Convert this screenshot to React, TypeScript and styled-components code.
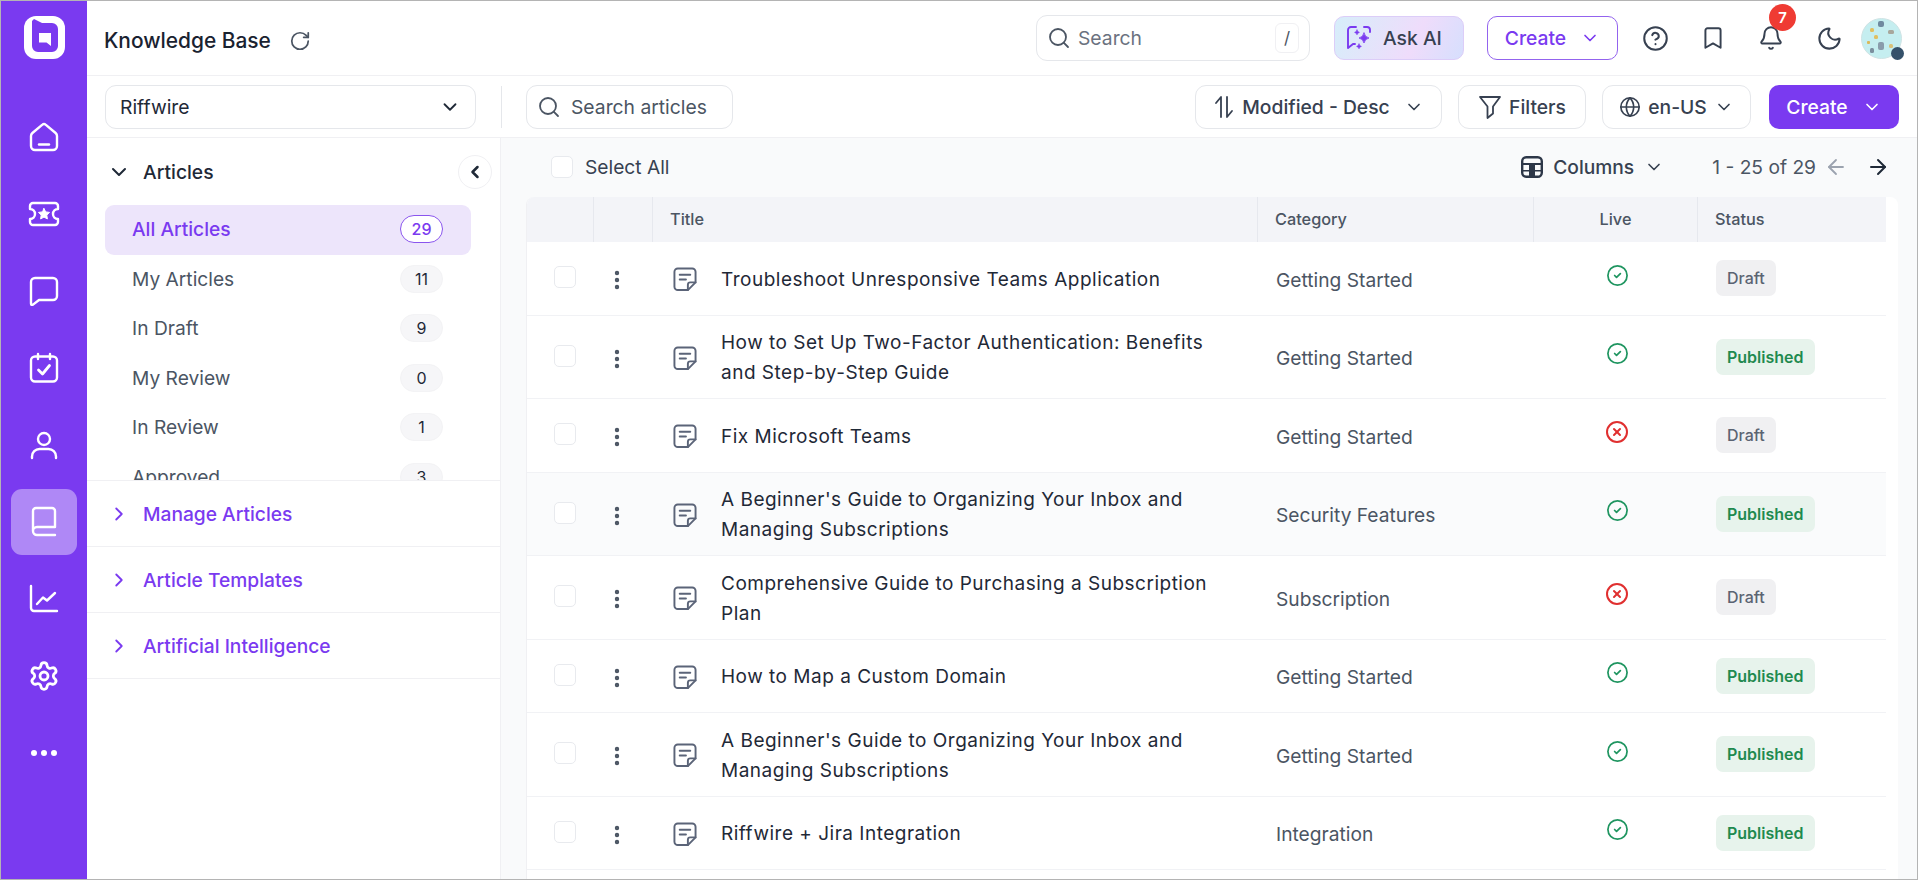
import React from "react";
import styled, { createGlobalStyle } from "styled-components";
import {
  ArrowLeft,
  ArrowRight,
  Bell,
  Bookmark,
  ChevronDown,
  ChevronLeft,
  ChevronRight,
  CircleCheck,
  CircleHelp,
  CircleX,
  EllipsisVertical,
  Globe,
  Moon,
  RotateCw,
  Search,
  Settings,
} from "lucide-react";

const GlobalStyle = createGlobalStyle`
  * { box-sizing: border-box; }
  html, body { margin: 0; padding: 0; background: #fff; }
  body { font-family: Inter, "Liberation Sans", sans-serif; }
`;

const Page = styled.div`
  display: flex;
  width: 1918px;
  height: 880px;
  overflow: hidden;
  border: 1px solid #b4b4b4;
  color: #1f2937;
`;

const Rail = styled.nav`
  flex: 0 0 86px;
  display: flex;
  flex-direction: column;
  align-items: center;
  background: #7a3af0;
  padding-top: 15px;
`;

const Logo = styled.div`
  height: 61px;
  margin-bottom: 27px;
`;

const RailItem = styled.div<{ $active?: boolean }>`
  width: 66px;
  height: 66px;
  margin-bottom: 11px;
  display: flex;
  align-items: center;
  justify-content: center;
  border-radius: 11px;
  color: #fff;
  background: ${(p) => (p.$active ? "rgba(255,255,255,0.4)" : "transparent")};
`;

const Main = styled.div`
  flex: 1;
  min-width: 0;
  display: flex;
  flex-direction: column;
`;

const TopBar = styled.header`
  flex: 0 0 75px;
  display: flex;
  align-items: center;
  padding: 0 15px 0 17px;
  border-bottom: 1px solid #f0f0f3;
`;

const PageTitle = styled.h1`
  margin: 5px 0 0;
  font-size: 20.9px;
  font-weight: 500;
  color: #1a2230;
`;

const Refresh = styled.span`
  display: flex;
  margin: 5px 0 0 18px;
  color: #4b5563;
`;

const TopRight = styled.div`
  margin-left: auto;
  display: flex;
  align-items: center;
`;

const GlobalSearch = styled.div`
  width: 274px;
  height: 46px;
  display: flex;
  align-items: center;
  gap: 7px;
  padding: 0 10px 0 10px;
  margin-right: 24px;
  border: 1.5px solid #e5e7eb;
  border-radius: 11px;
  color: #4b5563;
`;

const Placeholder = styled.span`
  flex: 1;
  color: #6b7280;
  font-size: 19.3px;
`;

const Kbd = styled.span`
  width: 24px;
  height: 30px;
  display: flex;
  align-items: center;
  justify-content: center;
  border: 1px solid #f0f0f3;
  border-radius: 6px;
  color: #4b5563;
  font-size: 17px;
`;

const AskAi = styled.div`
  width: 130px;
  height: 44px;
  display: flex;
  align-items: center;
  gap: 9px;
  padding-left: 9px;
  margin-right: 23px;
  border: 1.5px solid #dccdf8;
  border-radius: 10px;
  background: linear-gradient(115deg, #d6eefa 0%, #efdcfb 62%, #d6dffd 100%);
  font-size: 19.3px;
  font-weight: 500;
  color: #374151;
`;

const OutlineCreate = styled.div`
  width: 131px;
  height: 44px;
  display: flex;
  align-items: center;
  justify-content: center;
  gap: 14px;
  margin-right: 8px;
  border: 1.5px solid #9363ee;
  border-radius: 10px;
  color: #7a3af0;
  font-size: 19.3px;
  font-weight: 500;
`;

const TopIcon = styled.span`
  position: relative;
  width: 58px;
  display: flex;
  justify-content: center;
  color: #374151;
`;

const NotifyBadge = styled.span`
  position: absolute;
  top: -21px;
  left: 27px;
  width: 27px;
  height: 27px;
  display: flex;
  align-items: center;
  justify-content: center;
  border-radius: 50%;
  background: #ef3b33;
  color: #fff;
  font-size: 15px;
  font-weight: 600;
`;

const Avatar = styled.div`
  position: relative;
  width: 41px;
  height: 41px;
  margin-left: 3px;
`;

const AvatarDot = styled.span`
  position: absolute;
  right: -2px;
  bottom: -1px;
  width: 13px;
  height: 13px;
  border-radius: 50%;
  background: #35516a;
`;

const ToolBar = styled.div`
  flex: 0 0 62px;
  display: flex;
  align-items: center;
  padding: 0 18px 0 18px;
  border-bottom: 1px solid #f0f0f3;
`;

const Field = styled.div<{ $w: number }>`
  width: ${(p) => p.$w}px;
  height: 44px;
  display: flex;
  align-items: center;
  border: 1.5px solid #e5e7eb;
  border-radius: 11px;
  background: #fff;
  font-size: 19.3px;
  color: #374151;
`;

const ProjectSelect = styled(Field)`
  justify-content: space-between;
  padding: 0 14px;
  color: #1f2937;
`;

const Divider = styled.span`
  width: 1px;
  height: 42px;
  margin: 0 24px 0 25px;
  background: #e5e7eb;
`;

const ArticleSearch = styled(Field)`
  gap: 10px;
  padding: 0 10px;
  color: #4b5563;
`;

const ToolRight = styled.div`
  margin-left: auto;
  display: flex;
  align-items: center;
  gap: 16px;
`;

const ToolButton = styled(Field)`
  justify-content: center;
  gap: 7px;
  font-weight: 500;
`;

const SortChevron = styled.span`
  display: flex;
  margin-left: 7px;
`;

const PrimaryCreate = styled.div`
  width: 130px;
  height: 44px;
  display: flex;
  align-items: center;
  justify-content: center;
  gap: 14px;
  margin-left: 2px;
  border-radius: 10px;
  background: #7a3af0;
  color: #fff;
  font-size: 19.3px;
  font-weight: 500;
`;

const Body = styled.div`
  flex: 1;
  min-height: 0;
  display: flex;
`;

const SidePanel = styled.aside`
  flex: 0 0 414px;
  display: flex;
  flex-direction: column;
  border-right: 1px solid #f0f0f3;
  background: #fff;
`;

const PanelHead = styled.div`
  height: 67px;
  flex: none;
  display: flex;
  align-items: center;
  padding: 1px 8px 0 20px;
  font-size: 19.3px;
  font-weight: 500;
  color: #1f2937;
`;

const PanelHeadLabel = styled.span`
  margin-left: 12px;
  flex: 1;
`;

const CollapseButton = styled.span`
  width: 34px;
  height: 34px;
  display: flex;
  align-items: center;
  justify-content: center;
  border: 1px solid #f0f0f3;
  border-radius: 50%;
  color: #1f2937;
`;

const ViewList = styled.div`
  height: 275px;
  flex: none;
  overflow: hidden;
  padding: 0 29px 0 18px;
`;

const ViewRow = styled.div<{ $active?: boolean }>`
  height: 49.5px;
  display: flex;
  align-items: center;
  justify-content: space-between;
  padding: 0 28px 2px 27px;
  border-radius: 9px;
  font-size: 19.2px;
  background: ${(p) => (p.$active ? "#ede5fb" : "transparent")};
  color: ${(p) => (p.$active ? "#7a3af0" : "#4b5563")};
  font-weight: ${(p) => (p.$active ? 500 : 400)};
  &:first-child {
    height: 50px;
  }
`;

const ViewCount = styled.span<{ $active?: boolean }>`
  width: 43px;
  height: 28px;
  display: flex;
  align-items: center;
  justify-content: center;
  border-radius: 14px;
  font-size: 16px;
  color: ${(p) => (p.$active ? "#7a3af0" : "#1f2937")};
  background: ${(p) => (p.$active ? "#fff" : "#f6f6f8")};
  border: ${(p) => (p.$active ? "1.5px solid #8a55ee" : "1px solid #f3f3f5")};
`;

const Section = styled.div`
  height: 66px;
  flex: none;
  display: flex;
  align-items: center;
  gap: 13px;
  padding: 1px 0 0 21px;
  border-top: 1px solid #f0f0f3;
  color: #7a3af0;
  font-size: 19.2px;
  font-weight: 500;
  &:last-child {
    height: 67px;
    border-bottom: 1px solid #f0f0f3;
  }
`;

const Content = styled.section`
  flex: 1;
  min-width: 0;
  display: flex;
  flex-direction: column;
  background: #f9fafb;
`;

const ListBar = styled.div`
  flex: 0 0 59px;
  display: flex;
  align-items: center;
  padding: 0 27px 1px 50px;
  font-size: 19.2px;
  color: #374151;
`;

const CheckBox = styled.span`
  width: 22px;
  height: 22px;
  flex: none;
  display: block;
  background: #fff;
  border: 1.5px solid #e8eaee;
  border-radius: 5px;
`;

const SelectAll = styled.span`
  margin-left: 12px;
  font-weight: 400;
`;

const BarRight = styled.div`
  margin-left: auto;
  display: flex;
  align-items: center;
  color: #374151;
`;

const ColumnsLabel = styled.span`
  margin: 0 10px 0 10px;
  font-weight: 500;
`;

const PageRange = styled.span`
  margin: 0 8px 0 48px;
  color: #4b5563;
`;

const NextArrow = styled.span`
  display: flex;
  margin-left: 18px;
  color: #1f2937;
`;

const Card = styled.div`
  flex: 1;
  margin: 0 19px 0 25px;
  padding-right: 12px;
  background: #fff;
  border-radius: 8px 8px 0 0;
  border-left: 1px solid #f0f0f3;
  overflow: hidden;
`;

const gridColumns = "67px 59px 605px 276px 164px 188px";

const HeadRow = styled.div`
  height: 45px;
  display: grid;
  grid-template-columns: ${gridColumns};
  background: #f3f4f8;
  font-size: 16.3px;
  font-weight: 500;
  color: #4b5563;
`;

const HeadCell = styled.div<{ $center?: boolean }>`
  display: flex;
  align-items: center;
  justify-content: ${(p) => (p.$center ? "center" : "flex-start")};
  padding-left: ${(p) => (p.$center ? 0 : 17)}px;
  padding-bottom: 1px;
  border-right: 1.5px solid #e6e8ee;
  &:last-child {
    border-right: 0;
  }
`;

const Row = styled.div<{ $hover?: boolean }>`
  min-height: 73.5px;
  display: grid;
  grid-template-columns: ${gridColumns};
  align-items: center;
  padding: 12.5px 0 10px;
  border-bottom: 1.5px solid #f1f2f5;
  background: ${(p) => (p.$hover ? "#fafbfc" : "#fff")};
`;

const CheckCell = styled.div`
  display: flex;
  justify-content: center;
  padding-left: 8px;
  margin-top: -5px;
`;

const DotsCell = styled.div`
  display: flex;
  justify-content: center;
  padding-right: 14px;
  margin-top: 1px;
  color: #4b5563;
`;

const TitleCell = styled.div`
  display: flex;
  align-items: center;
  gap: 24px;
  padding-left: 20px;
`;

const TitleText = styled.span`
  font-size: 19px;
  letter-spacing: 0.5px;
  line-height: 30px;
  color: #1f2937;
  width: 495px;
`;

const CategoryCell = styled.div`
  padding-left: 18px;
  font-size: 19.2px;
  color: #4b5563;
`;

const LiveCell = styled.div<{ $ok: boolean }>`
  display: flex;
  justify-content: center;
  padding-left: 2px;
  margin-top: -9px;
  color: ${(p) => (p.$ok ? "#1f9560" : "#e02f2f")};
`;

const StatusCell = styled.div`
  padding-left: 18px;
  margin-top: -3px;
`;

const StatusBadge = styled.span<{ $published: boolean }>`
  display: inline-flex;
  align-items: center;
  height: 36px;
  padding: 0 11px;
  border-radius: 7px;
  font-size: 16px;
  font-weight: ${(p) => (p.$published ? 600 : 500)};
  background: ${(p) => (p.$published ? "#e7f3ec" : "#f0f0f2")};
  color: ${(p) => (p.$published ? "#1f8a4f" : "#5b6472")};
`;

const LogoMark = () => (
  <svg width="41" height="43" viewBox="0 0 41 43">
    <rect x="0" y="0" width="41" height="43" rx="12" fill="#fff" />
    <path d="M10 3 L18 7 H28 a6 6 0 0 1 6 6 V30 a6 6 0 0 1-6 6 H14 a6 6 0 0 1-6-6 V5 Z" fill="#7a3af0" />
    <path d="M15 17 H27 V30 L22.5 26.5 H15 Z" fill="#fff" />
  </svg>
);

const railStroke = {
  fill: "none",
  stroke: "#fff",
  strokeWidth: 2.4,
  strokeLinecap: "round" as const,
  strokeLinejoin: "round" as const,
};

const HomeIcon = () => (
  <svg width="32" height="32" viewBox="0 0 32 32" {...railStroke}>
    <path d="M14.4 3.6 a2.4 2.4 0 0 1 3.2 0 L27.6 12 Q29 13.2 29 15 V25 a4 4 0 0 1-4 4 H7 a4 4 0 0 1-4-4 V15 Q3 13.2 4.4 12 Z" />
    <path d="M11 23.5 H21" />
  </svg>
);

const TicketIcon = () => (
  <svg width="32" height="32" viewBox="0 0 32 32" {...railStroke}>
    <path d="M5 5 H27 a3 3 0 0 1 3 3 V11 a5 5 0 0 0 0 10 V24 a3 3 0 0 1-3 3 H5 a3 3 0 0 1-3-3 V21 a5 5 0 0 0 0-10 V8 a3 3 0 0 1 3-3 Z" />
    <path
      d="M16 10.5 l1.7 3.4 3.8.5 -2.7 2.7 .6 3.8 -3.4-1.8 -3.4 1.8 .6-3.8 -2.7-2.7 3.8-.5 Z"
      fill="#fff"
      strokeWidth="1"
    />
  </svg>
);

const ChatIcon = () => (
  <svg width="32" height="32" viewBox="0 0 32 32" {...railStroke}>
    <path d="M7 3 H25 a4 4 0 0 1 4 4 V21 a4 4 0 0 1-4 4 H11 L5 29.6 Q3 30.6 3 28.5 V7 a4 4 0 0 1 4-4 Z" />
  </svg>
);

const CalendarIcon = () => (
  <svg width="32" height="32" viewBox="0 0 32 32" {...railStroke}>
    <rect x="3" y="4.5" width="26" height="25" rx="4" />
    <path d="M10 2 V7 M22 2 V7" />
    <path d="M10.5 18 L14.5 22 L21.5 13.5" strokeWidth="2.8" />
  </svg>
);

const UserIcon = () => (
  <svg width="32" height="32" viewBox="0 0 32 32" {...railStroke}>
    <circle cx="16" cy="10" r="6" />
    <path d="M4 29 V27.5 a7.5 7.5 0 0 1 7.5-7.5 H20.5 a7.5 7.5 0 0 1 7.5 7.5 V29" />
  </svg>
);

const BookIcon = () => (
  <svg width="32" height="32" viewBox="0 0 32 32" {...railStroke}>
    <path d="M5 25 V5 a3 3 0 0 1 3-3 H24 a3 3 0 0 1 3 3 V21 H9 a4 4 0 0 0-4 4 a4 4 0 0 0 4 4 H27" />
  </svg>
);

const ChartIcon = () => (
  <svg width="32" height="32" viewBox="0 0 32 32" {...railStroke}>
    <path d="M3 3 V25 a3 3 0 0 0 3 3 H29" />
    <path d="M9 21 L15 14.5 L19 17.5 L27 10" />
  </svg>
);

const DotsIcon = () => (
  <svg width="28" height="8" viewBox="0 0 28 8">
    <circle cx="4" cy="4" r="3" fill="#fff" />
    <circle cx="14" cy="4" r="3" fill="#fff" />
    <circle cx="24" cy="4" r="3" fill="#fff" />
  </svg>
);

const SparkBubble = () => (
  <svg width="30" height="30" viewBox="0 0 30 30" fill="none" stroke="#7a3af0" strokeWidth="1.9" strokeLinecap="round" strokeLinejoin="round">
    <path d="M12 4 H7 a3 3 0 0 0-3 3 V25 L9 21 H11 M20 4 H23 a3 3 0 0 1 3 3 V9" />
    <path d="M20 10 q.8 4.2 5 5 q-4.2.8-5 5 q-.8-4.2-5-5 q4.2-.8 5-5 Z" fill="#7a3af0" strokeWidth="0.8" />
    <path d="M13 7 q.4 2 2.4 2.4 q-2 .4-2.4 2.4 q-.4-2-2.4-2.4 q2-.4 2.4-2.4 Z" fill="#7a3af0" strokeWidth="0.6" />
    <path d="M15 21 q.4 2 2.4 2.4 q-2 .4-2.4 2.4 q-.4-2-2.4-2.4 q2-.4 2.4-2.4 Z" fill="#7a3af0" strokeWidth="0.6" />
  </svg>
);

const AvatarArt = () => (
  <svg width="41" height="41" viewBox="0 0 41 41">
    <circle cx="20.5" cy="20.5" r="20" fill="#c5eef0" stroke="#cfe3e4" />
    <rect x="17" y="3" width="6" height="6" rx="2" fill="#6f8aa0" />
    <rect x="9" y="10" width="4" height="4" rx="1.5" fill="#e0bf60" />
    <rect x="27" y="12" width="6" height="4" rx="1.5" fill="#a8a79c" />
    <rect x="13" y="17" width="4" height="4" rx="1.5" fill="#e0bf60" />
    <rect x="6" y="23" width="3" height="3" rx="1" fill="#d9b95a" />
    <rect x="17" y="24" width="6" height="8" rx="2" fill="#8a9cac" />
    <rect x="9" y="30" width="4" height="5" rx="1.5" fill="#7b8f9e" />
    <rect x="28" y="26" width="4" height="4" rx="1.5" fill="#d9c27a" />
  </svg>
);

const SortIcon = () => (
  <svg width="22" height="26" viewBox="0 0 22 26" fill="none" stroke="#374151" strokeWidth="1.8" strokeLinecap="round" strokeLinejoin="round">
    <path d="M8 23 V3 L3 9" />
    <path d="M14 3 V23 L19 17" />
  </svg>
);

const FunnelIcon = () => (
  <svg width="24" height="26" viewBox="0 0 24 26" fill="none" stroke="#374151" strokeWidth="1.8" strokeLinejoin="round">
    <path d="M2 3 H22 L15 12.5 V19.5 L9.5 24 V12.5 Z" />
  </svg>
);

const ColumnsIcon = () => (
  <svg width="22" height="24" viewBox="0 0 22 24">
    <rect x="1.2" y="2.2" width="19.6" height="19.6" rx="4" fill="none" stroke="#2d3748" strokeWidth="2.4" />
    <path d="M2 8 H20 V10 H2 Z M2 15 H20 V16.5 H2 Z" fill="#2d3748" />
    <rect x="8" y="8" width="6" height="13" fill="#2d3748" />
  </svg>
);

const NoteIcon = () => (
  <svg width="24" height="25" viewBox="0 0 25 26" fill="none" stroke="#5b6478" strokeWidth="2" strokeLinecap="round" strokeLinejoin="round">
    <path d="M15.5 24 H5 a3.5 3.5 0 0 1-3.5-3.5 V5 A3.5 3.5 0 0 1 5 1.5 H20 A3.5 3.5 0 0 1 23.5 5 V16 Z" />
    <path d="M23.5 16 H18 a2.5 2.5 0 0 0-2.5 2.5 V24" />
    <path d="M7 8 H18 M7 13 H13.5" />
  </svg>
);

const railIcons = [
  { key: "home", icon: <HomeIcon /> },
  { key: "tickets", icon: <TicketIcon /> },
  { key: "chat", icon: <ChatIcon /> },
  { key: "tasks", icon: <CalendarIcon /> },
  { key: "users", icon: <UserIcon /> },
  { key: "kb", icon: <BookIcon />, active: true },
  { key: "reports", icon: <ChartIcon /> },
  { key: "settings", icon: <Settings size={32} strokeWidth={2.1} /> },
  { key: "more", icon: <DotsIcon /> },
];

const views = [
  { name: "All Articles", count: 29, active: true },
  { name: "My Articles", count: 11 },
  { name: "In Draft", count: 9 },
  { name: "My Review", count: 0 },
  { name: "In Review", count: 1 },
  { name: "Approved", count: 3 },
];

const sections = ["Manage Articles", "Article Templates", "Artificial Intelligence"];

const articles = [
  { title: "Troubleshoot Unresponsive Teams Application", category: "Getting Started", live: true, status: "Draft" },
  { title: "How to Set Up Two-Factor Authentication: Benefits and Step-by-Step Guide", category: "Getting Started", live: true, status: "Published" },
  { title: "Fix Microsoft Teams", category: "Getting Started", live: false, status: "Draft" },
  { title: "A Beginner's Guide to Organizing Your Inbox and Managing Subscriptions", category: "Security Features", live: true, status: "Published", hover: true },
  { title: "Comprehensive Guide to Purchasing a Subscription Plan", category: "Subscription", live: false, status: "Draft" },
  { title: "How to Map a Custom Domain", category: "Getting Started", live: true, status: "Published" },
  { title: "A Beginner's Guide to Organizing Your Inbox and Managing Subscriptions", category: "Getting Started", live: true, status: "Published" },
  { title: "Riffwire + Jira Integration", category: "Integration", live: true, status: "Published" },
];

const App = () => {
  return (
    <Page>
      <GlobalStyle />
      <Rail>
        <Logo>
          <LogoMark />
        </Logo>
        {railIcons.map((item) => (
          <RailItem key={item.key} $active={item.active}>
            {item.icon}
          </RailItem>
        ))}
      </Rail>
      <Main>
        <TopBar>
          <PageTitle>Knowledge Base</PageTitle>
          <Refresh>
            <RotateCw size={22} strokeWidth={1.9} />
          </Refresh>
          <TopRight>
            <GlobalSearch>
              <Search size={24} strokeWidth={1.8} />
              <Placeholder>Search</Placeholder>
              <Kbd>/</Kbd>
            </GlobalSearch>
            <AskAi>
              <SparkBubble />
              Ask AI
            </AskAi>
            <OutlineCreate>
              Create
              <ChevronDown size={20} strokeWidth={2} />
            </OutlineCreate>
            <TopIcon>
              <CircleHelp size={27} strokeWidth={1.8} />
            </TopIcon>
            <TopIcon>
              <Bookmark size={26} strokeWidth={1.8} />
            </TopIcon>
            <TopIcon>
              <Bell size={26} strokeWidth={1.8} />
              <NotifyBadge>7</NotifyBadge>
            </TopIcon>
            <TopIcon>
              <Moon size={27} strokeWidth={1.8} />
            </TopIcon>
            <Avatar>
              <AvatarArt />
              <AvatarDot />
            </Avatar>
          </TopRight>
        </TopBar>
        <ToolBar>
          <ProjectSelect $w={371}>
            Riffwire
            <ChevronDown size={22} strokeWidth={2} />
          </ProjectSelect>
          <Divider />
          <ArticleSearch $w={207}>
            <Search size={24} strokeWidth={1.8} />
            Search articles
          </ArticleSearch>
          <ToolRight>
            <ToolButton $w={247}>
              <SortIcon />
              Modified - Desc
              <SortChevron>
                <ChevronDown size={20} strokeWidth={2} />
              </SortChevron>
            </ToolButton>
            <ToolButton $w={128}>
              <FunnelIcon />
              Filters
            </ToolButton>
            <ToolButton $w={149}>
              <Globe size={22} strokeWidth={1.8} />
              en-US
              <ChevronDown size={20} strokeWidth={2} />
            </ToolButton>
            <PrimaryCreate>
              Create
              <ChevronDown size={20} strokeWidth={2} />
            </PrimaryCreate>
          </ToolRight>
        </ToolBar>
        <Body>
          <SidePanel>
            <PanelHead>
              <ChevronDown size={24} strokeWidth={2} />
              <PanelHeadLabel>Articles</PanelHeadLabel>
              <CollapseButton>
                <ChevronLeft size={20} strokeWidth={3} />
              </CollapseButton>
            </PanelHead>
            <ViewList>
              {views.map((view) => (
                <ViewRow key={view.name} $active={view.active}>
                  {view.name}
                  <ViewCount $active={view.active}>{view.count}</ViewCount>
                </ViewRow>
              ))}
            </ViewList>
            {sections.map((name) => (
              <Section key={name}>
                <ChevronRight size={22} strokeWidth={2} />
                {name}
              </Section>
            ))}
          </SidePanel>
          <Content>
            <ListBar>
              <CheckBox />
              <SelectAll>Select All</SelectAll>
              <BarRight>
                <ColumnsIcon />
                <ColumnsLabel>Columns</ColumnsLabel>
                <ChevronDown size={20} strokeWidth={2} />
                <PageRange>1 - 25 of 29</PageRange>
                <ArrowLeft size={24} strokeWidth={1.8} color="#9ca3af" />
                <NextArrow>
                  <ArrowRight size={24} strokeWidth={2} />
                </NextArrow>
              </BarRight>
            </ListBar>
            <Card>
              <HeadRow>
                <HeadCell />
                <HeadCell />
                <HeadCell>Title</HeadCell>
                <HeadCell>Category</HeadCell>
                <HeadCell $center>Live</HeadCell>
                <HeadCell>Status</HeadCell>
              </HeadRow>
              {articles.map((article, i) => (
                <Row key={i} $hover={article.hover}>
                  <CheckCell>
                    <CheckBox />
                  </CheckCell>
                  <DotsCell>
                    <EllipsisVertical size={24} strokeWidth={2.4} />
                  </DotsCell>
                  <TitleCell>
                    <NoteIcon />
                    <TitleText>{article.title}</TitleText>
                  </TitleCell>
                  <CategoryCell>{article.category}</CategoryCell>
                  <LiveCell $ok={article.live}>
                    {article.live ? (
                      <CircleCheck size={23} strokeWidth={1.8} />
                    ) : (
                      <CircleX size={24} strokeWidth={2} />
                    )}
                  </LiveCell>
                  <StatusCell>
                    <StatusBadge $published={article.status === "Published"}>{article.status}</StatusBadge>
                  </StatusCell>
                </Row>
              ))}
            </Card>
          </Content>
        </Body>
      </Main>
    </Page>
  );
};

export default App;
